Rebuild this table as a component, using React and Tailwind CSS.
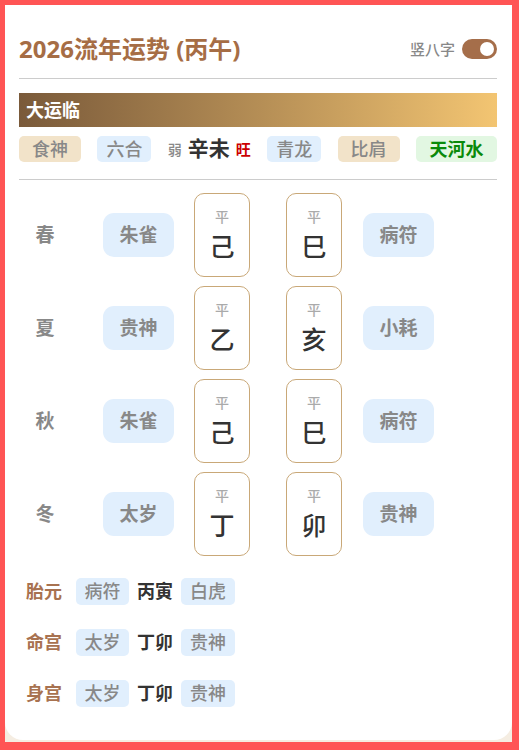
import React from 'react';

const seasons = [
  { label: '春', left: '朱雀', stem: '己', branch: '巳', right: '病符' },
  { label: '夏', left: '贵神', stem: '乙', branch: '亥', right: '小耗' },
  { label: '秋', left: '朱雀', stem: '己', branch: '巳', right: '病符' },
  { label: '冬', left: '太岁', stem: '丁', branch: '卯', right: '贵神' },
];

const palaces = [
  { label: '胎元', a: '病符', gz: '丙寅', b: '白虎' },
  { label: '命宫', a: '太岁', gz: '丁卯', b: '贵神' },
  { label: '身宫', a: '太岁', gz: '丁卯', b: '贵神' },
];

function PillarBox({ char }) {
  return (
    <div className="w-[56px] h-[84px] rounded-[10px] border border-[#c9a878] flex flex-col items-center pt-[13px]">
      <span className="text-[14px] leading-[20px] text-[#aaaaaa] font-medium">平</span>
      <span className="text-[25px] leading-[34px] text-[#333333] font-medium mt-[2px]">{char}</span>
    </div>
  );
}

export default function App() {
  return (
    <div className="w-[519px] h-[750px] overflow-hidden border-l-[5px] border-t-[5px] border-r-[7px] border-b-[8px] border-[#ff5555] bg-[#f5ede2] font-['Noto_Sans','Noto_Sans_CJK_SC',sans-serif]">
      <div className="bg-white rounded-b-[18px] h-[735px] pl-[14px] pr-[15px] pt-[29px]">
        {/* Header */}
        <div className="flex items-center justify-between h-[30px]">
          <h1 className="text-[24px] font-bold text-[#a66d45] leading-[30px]">2026流年运势 (丙午)</h1>
          <div className="flex items-center gap-[7px]">
            <span className="text-[15px] text-[#888888] font-medium">竖八字</span>
            <div className="w-[35px] h-[20px] rounded-full bg-[#a56e4a] flex items-center justify-end pr-[3px]">
              <div className="w-[14px] h-[14px] rounded-full bg-white" />
            </div>
          </div>
        </div>
        <div className="mt-[14px] border-b border-[#cccccc]" />

        {/* Da yun bar */}
        <div className="mt-[14px] h-[34px] bg-gradient-to-r from-[#7a5a3a] to-[#f3c572] flex items-center pl-[7px]">
          <span className="text-[18px] font-bold text-white">大运临</span>
        </div>

        {/* Tags row */}
        <div className="mt-[9px] h-[26px] flex items-center justify-between">
          <span className="h-[26px] w-[62px] rounded-[5px] bg-[#f2e3c9] text-[#888888] text-[18px] font-medium flex items-center justify-center">食神</span>
          <span className="h-[26px] w-[54px] rounded-[5px] bg-[#e1effd] text-[#888888] text-[18px] font-medium flex items-center justify-center">六合</span>
          <span className="flex items-center gap-[6px]">
            <span className="text-[14px] text-[#888888] font-medium">弱</span>
            <span className="text-[21px] text-[#333333] font-bold">辛未</span>
            <span className="text-[15px] text-[#cc0000] font-bold">旺</span>
          </span>
          <span className="h-[26px] w-[54px] rounded-[5px] bg-[#e1effd] text-[#888888] text-[18px] font-medium flex items-center justify-center">青龙</span>
          <span className="h-[26px] w-[62px] rounded-[5px] bg-[#f2e3c9] text-[#888888] text-[18px] font-medium flex items-center justify-center">比肩</span>
          <span className="h-[26px] w-[81px] rounded-[5px] bg-[#e2f7e2] text-[#0a8a0a] text-[18px] font-bold flex items-center justify-center">天河水</span>
        </div>
        <div className="mt-[17px] border-b border-[#cccccc]" />

        {/* Seasons */}
        <div className="mt-[13px] flex flex-col gap-[9px]">
          {seasons.map((s) => (
            <div key={s.label} className="flex items-center">
              <span className="w-[52px] text-center text-[19px] font-bold text-[#888888]">{s.label}</span>
              <span className="ml-[32px] w-[71px] h-[44px] rounded-[11px] bg-[#e1effd] text-[#888888] text-[19px] font-bold flex items-center justify-center">{s.left}</span>
              <div className="ml-[20px]"><PillarBox char={s.stem} /></div>
              <div className="ml-[36px]"><PillarBox char={s.branch} /></div>
              <span className="ml-[21px] w-[71px] h-[44px] rounded-[11px] bg-[#e1effd] text-[#888888] text-[19px] font-bold flex items-center justify-center">{s.right}</span>
            </div>
          ))}
        </div>

        {/* Palaces */}
        <div className="mt-[22px] flex flex-col gap-[24px]">
          {palaces.map((p) => (
            <div key={p.label} className="flex items-center h-[27px]">
              <span className="ml-[7px] text-[18px] font-bold text-[#a87250]">{p.label}</span>
              <span className="ml-[14px] w-[53px] h-[27px] rounded-[5px] bg-[#e1effd] text-[#888888] text-[18px] font-medium flex items-center justify-center">{p.a}</span>
              <span className="ml-[8px] text-[18px] font-bold text-[#333333]">{p.gz}</span>
              <span className="ml-[8px] w-[54px] h-[27px] rounded-[5px] bg-[#e1effd] text-[#888888] text-[18px] font-medium flex items-center justify-center">{p.b}</span>
            </div>
          ))}
        </div>
      </div>
    </div>
  );
}
